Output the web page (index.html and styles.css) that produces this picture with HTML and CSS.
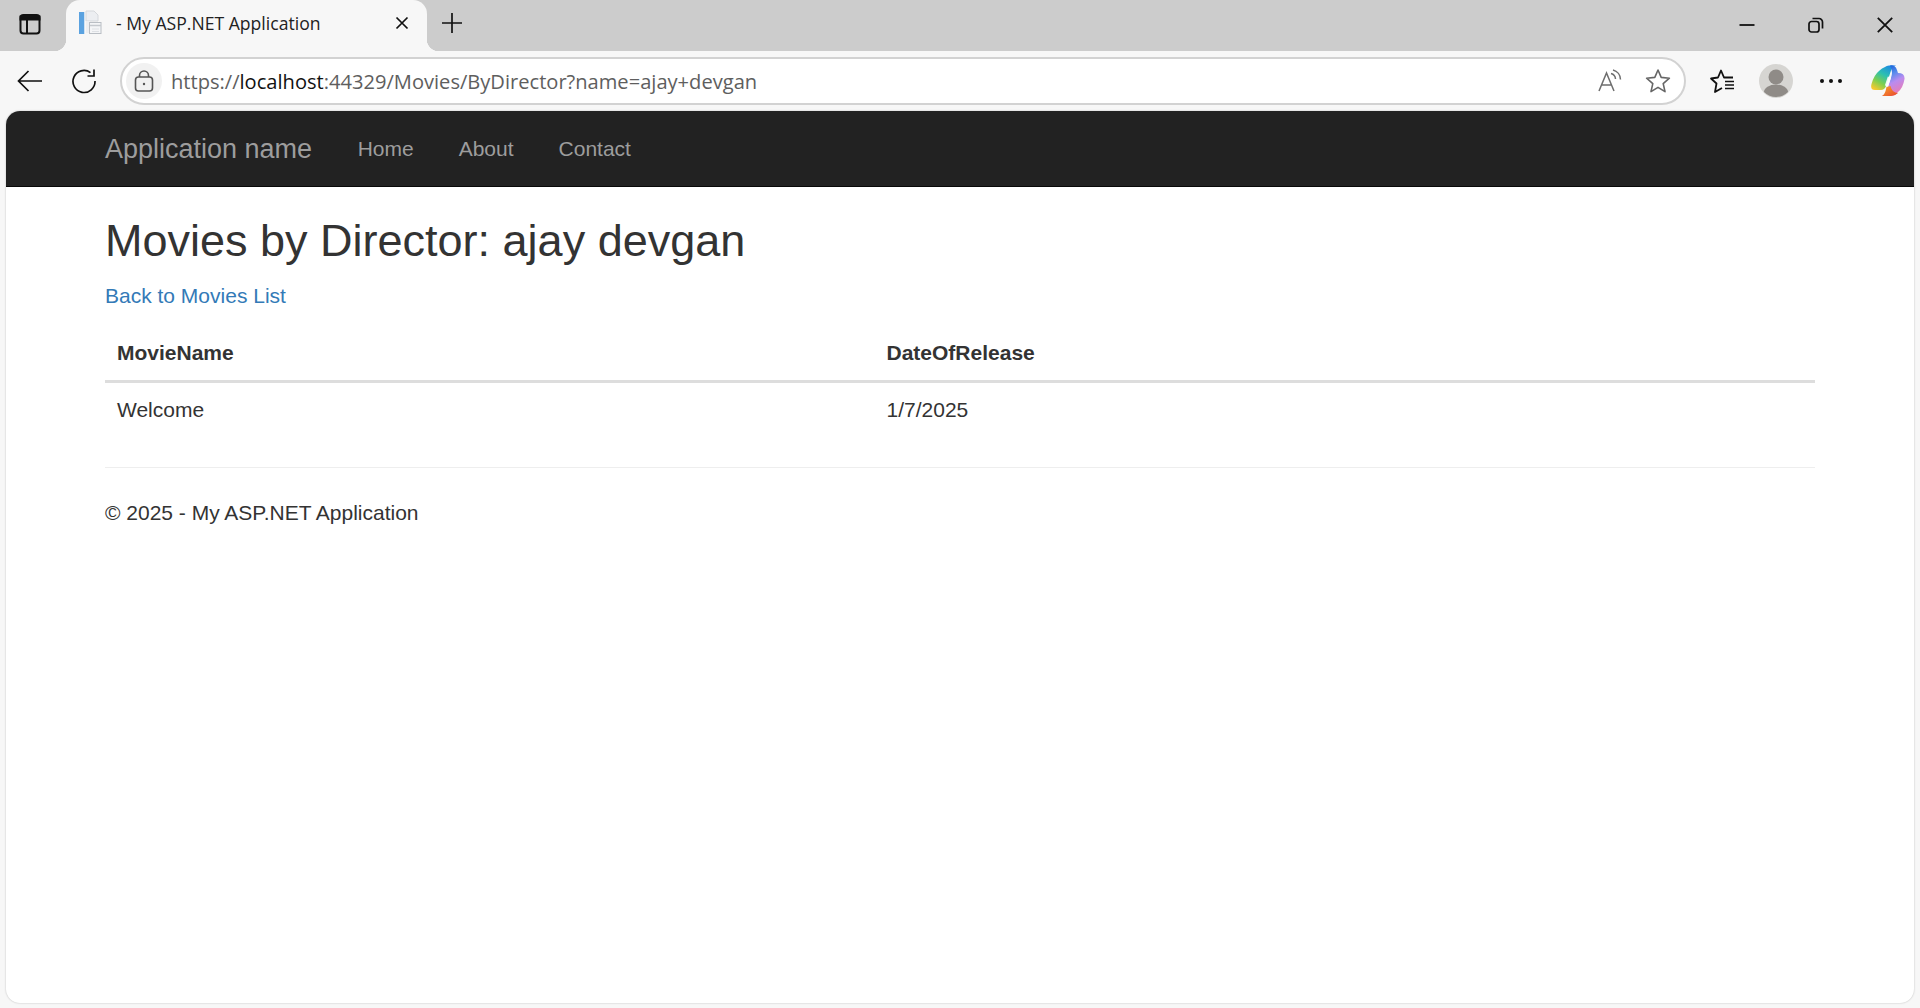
FILE: index.html
```html
<!DOCTYPE html>
<html>

<head>
  <title>- My ASP.NET Application</title>
  <link rel="stylesheet" href="styles.css">
</head>

<body>
  <div class="tab-strip">
    <div class="sidebar-btn">
      <svg width="24" height="24" viewBox="0 0 24 24" fill="none" stroke="#111" stroke-width="2">
        <rect x="2.5" y="3" width="19" height="18.5" rx="3"/>
        <path d="M2.5 4.5 h19 v3 h-19z" fill="#111"/>
        <path d="M9 7 v14"/>
      </svg>
    </div>
    <div class="tab">
      <svg class="favicon" width="24" height="26" viewBox="0 0 24 26">
        <rect x="1" y="2" width="5" height="22" fill="#5aa2e0"/>
        <rect x="6" y="2" width="1" height="22" fill="#cfe2f3"/>
        <path d="M8 1 h8 l4 4 v6 h-12z" fill="#eceef1" stroke="#d5d8dc"/>
        <rect x="8" y="11" width="4" height="12" fill="#eceef1"/>
        <rect x="11.500" y="12.500" width="11.500" height="11" fill="#f4f5f7" stroke="#b9bec4"/>
        <path d="M12 15.500 h11" stroke="#c5c9ce" stroke-width="1.500"/>
        <path d="M14 19 h7 M14 21.500 h7" stroke="#dde0e4"/>
      </svg>
      <span class="tab-title">- My ASP.NET Application</span>
      <svg class="tab-close" width="14" height="14" viewBox="0 0 14 14" stroke="#111" stroke-width="1.7">
        <path d="M1.5 1.5 L12.5 12.5 M12.5 1.5 L1.5 12.5"/>
      </svg>
    </div>
    <div class="new-tab">
      <svg width="22" height="22" viewBox="0 0 22 22" stroke="#111" stroke-width="1.7">
        <path d="M11 1 v20 M1 11 h20"/>
      </svg>
    </div>
    <div class="window-controls">
      <svg width="16" height="16" viewBox="0 0 16 16" stroke="#111" stroke-width="1.8">
        <path d="M0.5 8 h15"/>
      </svg>
      <svg width="16" height="16" viewBox="0 0 16 16" fill="none" stroke="#111" stroke-width="1.7">
        <rect x="1" y="4.5" width="10" height="10.5" rx="2.5"/>
        <path d="M4.5 1.5 h6.5 a3.5 3.5 0 0 1 3.5 3.5 v6.5"/>
      </svg>
      <svg width="16" height="16" viewBox="0 0 16 16" stroke="#111" stroke-width="1.8">
        <path d="M0.8 0.8 L15.2 15.2 M15.2 0.8 L0.8 15.2"/>
      </svg>
    </div>
  </div>

  <div class="toolbar">
    <div class="nav-btns">
      <svg width="26" height="24" viewBox="0 0 26 24" fill="none" stroke="#111" stroke-width="1.7">
        <path d="M25 12 H2 M11.5 2 L1.5 12 L11.5 22"/>
      </svg>
      <svg width="26" height="26" viewBox="0 0 26 26" fill="none" stroke="#111" stroke-width="1.7">
        <path d="M19.5 4.6 A11 11 0 1 0 24 13"/>
        <path d="M23 1.5 V8 H16.5"/>
      </svg>
    </div>
    <div class="address-bar">
      <div class="lock-wrap">
        <svg width="20" height="22" viewBox="0 0 20 22" fill="none" stroke="#555" stroke-width="1.6">
          <rect x="1.5" y="7" width="17" height="14" rx="3"/>
          <path d="M5.5 7 V5.5 a4.5 4.5 0 0 1 9 0 V7"/>
          <circle cx="10" cy="14" r="1.2" fill="#555" stroke="none"/>
        </svg>
      </div>
      <div class="url"><span class="url-dim">https://</span><span class="url-host">localhost</span><span class="url-dim">:44329/Movies/ByDirector?name=ajay+devgan</span></div>
      <svg class="read-aloud" width="24" height="24" viewBox="0 0 24 24" fill="none" stroke="#6e6e6e" stroke-width="1.5">
        <path d="M1 22 L8.5 4 L16 22 M3.5 16 H13.5"/>
        <path d="M13 4.5 a6 6 0 0 1 4.5 5.5 M15 1 a10 10 0 0 1 7.5 9.5"/>
      </svg>
      <svg class="fav-star" width="26" height="26" viewBox="0 0 26 26" fill="none" stroke="#666" stroke-width="1.6" stroke-linejoin="round">
        <path d="M13 2 L16.2 9.4 L24.4 10.2 L18.2 15.6 L20 23.6 L13 19.4 L6 23.6 L7.8 15.6 L1.6 10.2 L9.8 9.4Z"/>
      </svg>
    </div>
    <div class="tool-btns">
      <svg class="favs" width="26" height="26" viewBox="0 0 26 26" fill="none" stroke="#111" stroke-width="1.8" stroke-linejoin="round">
        <path d="M13 20 L6 24 L7.500 15.500 L2 10.500 L9 9.500 L12 2.500 L15 9.500 H24"/>
        <path d="M16 13.500 H25 M16 17 H25 M16 20.500 H25" stroke-width="1.500"/>
      </svg>
      <svg class="avatar" width="34" height="34" viewBox="0 0 34 34">
        <circle cx="17" cy="17" r="17" fill="#d6d5d2"/>
        <circle cx="17" cy="13" r="7.5" fill="#8f8b87"/>
        <path d="M5 28 a12 7.5 0 0 1 24 0 a17 17 0 0 1 -24 0z" fill="#8f8b87"/>
      </svg>
      <div class="more-dots"><i></i><i></i><i></i></div>
      <svg class="copilot" width="34" height="32" viewBox="0 0 34 32">
        <defs>
          <linearGradient id="cp-left" x1="0.8" y1="0" x2="0.2" y2="1">
            <stop offset="0" stop-color="#1c86e8"/>
            <stop offset="0.4" stop-color="#2cc0b0"/>
            <stop offset="0.7" stop-color="#7ccf50"/>
            <stop offset="1" stop-color="#f6c92e"/>
          </linearGradient>
          <linearGradient id="cp-right" x1="0.3" y1="0" x2="0.7" y2="1">
            <stop offset="0" stop-color="#1560d8"/>
            <stop offset="0.3" stop-color="#5a8cec"/>
            <stop offset="0.55" stop-color="#b98cf0"/>
            <stop offset="1" stop-color="#f478a8"/>
          </linearGradient>
          <linearGradient id="cp-low" x1="0" y1="0" x2="1" y2="1">
            <stop offset="0" stop-color="#f7a62a"/>
            <stop offset="1" stop-color="#e8452e"/>
          </linearGradient>
        </defs>
        <path d="M14 2 Q15.500 .5 18 .5 H25 Q21 2 19.500 7 L15 21 Q13.500 25 10 25 H4 Q-1 25 .5 19 Q3 10 8 6 Q11 3 14 2Z" fill="url(#cp-left)"/>
        <path d="M19 .5 Q24 -.5 26 5 L27 8 Q34 8 33.500 14 Q32 23 27 27 Q24 31 20 31 H11 Q14 30 15.500 26 L20.500 11 Q22 6 19 .5Z" fill="url(#cp-right)"/>
        <path d="M15.500 22 L19.500 21 Q21 28 27 28 Q24 31 20 31 H11 Q14 30 15.500 22Z" fill="url(#cp-low)"/>
        <path d="M18.500 12 L15.500 21" stroke="#fff" stroke-width="3.500" opacity="0.9"/>
      </svg>
    </div>
  </div>

  <div class="page">
    <nav class="navbar">
      <a class="brand" href="#">Application name</a>
      <a class="nav-link" href="#">Home</a>
      <a class="nav-link" href="#">About</a>
      <a class="nav-link" href="#">Contact</a>
    </nav>
    <div class="container">
      <h2>Movies by Director: ajay devgan</h2>
      <p class="back"><a href="#">Back to Movies List</a></p>
      <table class="table">
        <thead>
          <tr>
            <th class="col-name">MovieName</th>
            <th>DateOfRelease</th>
          </tr>
        </thead>
        <tbody>
          <tr>
            <td>Welcome</td>
            <td>1/7/2025</td>
          </tr>
        </tbody>
      </table>
      <hr>
      <footer>© 2025 - My ASP.NET Application</footer>
    </div>
  </div>
</body>

</html>
```

FILE: styles.css
```css
html,
body {
  height: 100%;
}

body {
  margin: 0;
  display: flex;
  flex-direction: column;
  background: #f7f7f7;
  font-family: "Liberation Sans", Arial, sans-serif;
  font-size: 21px;
  line-height: 30px;
  color: #333;
  overflow: hidden;
}

a {
  text-decoration: none;
}

/* browser chrome */
.tab-strip {
  display: flex;
  align-items: center;
  height: 51px;
  flex: none;
  background: #cccccc;
  font-family: "Open Sans", "Noto Sans", sans-serif;
}

.sidebar-btn {
  width: 66px;
  height: 100%;
  display: flex;
  align-items: center;
  justify-content: center;
  padding: 0 6px 3px 0;
  box-sizing: border-box;
}

.tab {
  position: relative;
  width: 361px;
  height: 100%;
  display: flex;
  align-items: center;
  box-sizing: border-box;
  padding: 0 18px 5px 12px;
  background: #f7f7f7;
  border-radius: 14px 14px 0 0;
}

.tab::before,
.tab::after {
  content: "";
  position: absolute;
  bottom: 0;
  width: 12px;
  height: 12px;
}

.tab::before {
  left: -12px;
  background: radial-gradient(circle at 0 0, transparent 12px, #f7f7f7 12.5px);
}

.tab::after {
  right: -12px;
  background: radial-gradient(circle at 100% 0, transparent 12px, #f7f7f7 12.5px);
}

.favicon {
  flex: none;
}

.tab-title {
  margin-left: 14px;
  flex: 1;
  font-size: 17.6px;
  line-height: 24px;
  color: #222;
}

.tab-close {
  flex: none;
}

.new-tab {
  margin: 0 0 5px 14px;
  display: flex;
}

.window-controls {
  margin-left: auto;
  display: flex;
  gap: 53px;
  padding: 0 27px 1px 0;
}

.toolbar {
  display: flex;
  align-items: center;
  height: 60px;
  flex: none;
  background: #f7f7f7;
}

.nav-btns {
  width: 120px;
  flex: none;
  display: flex;
  align-items: center;
  gap: 28px;
  padding-left: 17px;
  box-sizing: border-box;
}

.address-bar {
  width: 1566px;
  height: 48px;
  flex: none;
  display: flex;
  align-items: center;
  box-sizing: border-box;
  padding: 0 13px 0 4px;
  background: #fff;
  border: 2px solid #d2d2d2;
  border-radius: 24px;
}

.lock-wrap {
  width: 36px;
  height: 36px;
  flex: none;
  display: flex;
  align-items: center;
  justify-content: center;
  background: #f1f1f1;
  border-radius: 50%;
}

.url {
  margin-left: 9px;
  padding-top: 2px;
  flex: 1;
  font-family: "Open Sans", "Noto Sans", sans-serif;
  font-size: 20.1px;
  line-height: 28px;
  white-space: nowrap;
}

.url-dim {
  color: #5e5e5e;
}

.url-host {
  color: #111;
}

.read-aloud {
  margin-right: 23px;
}

.tool-btns {
  flex: 1;
  display: flex;
  align-items: center;
  padding-left: 23px;
}

.avatar {
  margin-left: 24px;
}

.more-dots {
  margin-left: 27px;
  display: flex;
  gap: 5px;
}

.more-dots i {
  width: 4px;
  height: 4px;
  border-radius: 50%;
  background: #111;
}

.copilot {
  margin-left: 29px;
}

/* page inside the browser */
.page {
  flex: 1;
  margin: 0 6px 5px;
  background: #fff;
  border-radius: 14px;
  box-shadow: 0 0 2px rgba(0, 0, 0, 0.25);
}

.navbar {
  height: 76px;
  box-sizing: border-box;
  display: flex;
  align-items: center;
  padding-left: 99px;
  background: #222;
  border-bottom: 1px solid #080808;
  border-radius: 14px 14px 0 0;
}

.brand {
  font-size: 27px;
  color: #9d9d9d;
  margin-right: 23px;
}

.nav-link {
  padding: 0 22.500px;
  color: #9d9d9d;
}

.container {
  padding: 0 99px;
}

h2 {
  margin: 29px 0 15px;
  font-size: 45px;
  line-height: 50px;
  font-weight: 500;
}

.back {
  margin: 0 0 15px;
}

.back a {
  color: #337ab7;
}

.table {
  width: 100%;
  border-collapse: collapse;
}

.table th,
.table td {
  padding: 12px;
  text-align: left;
}

.table th {
  border-bottom: 3px solid #ddd;
}

.col-name {
  width: 45%;
}

hr {
  margin: 30px 0 30px;
  border: 0;
  border-top: 1px solid #eee;
}

footer {
  margin-bottom: 15px;
}
```
